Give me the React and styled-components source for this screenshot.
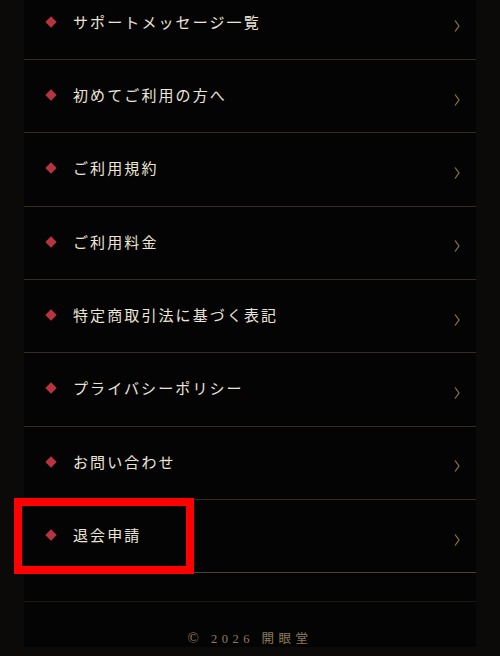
import styled, { createGlobalStyle } from "styled-components";

const GlobalStyle = createGlobalStyle`
  html, body {
    margin: 0;
    padding: 0;
    background: #0b0a08;
    overflow: hidden;
  }
`;

const items = [
  "サポートメッセージ一覧",
  "初めてご利用の方へ",
  "ご利用規約",
  "ご利用料金",
  "特定商取引法に基づく表記",
  "プライバシーポリシー",
  "お問い合わせ",
  "退会申請",
];

const App = () => (
  <>
    <GlobalStyle />
    <Page>
      <Menu>
        {items.map((label, i) => (
          <MenuRow key={label} $last={i === items.length - 1}>
            <Diamond />
            <Label>{label}</Label>
            <Chevron viewBox="0 0 6 12" aria-hidden="true">
              <polyline points="1,0.5 5,6 1,11.5" />
            </Chevron>
            {label === "退会申請" && <Highlight />}
          </MenuRow>
        ))}
      </Menu>
      <Footer>
        <Copy>©</Copy> 2026 開眼堂
      </Footer>
    </Page>
  </>
);

export default App;

const Page = styled.div`
  width: 452px;
  min-height: 656px;
  margin: 0 24px;
  background: #050404;
  font-family: "Noto Sans CJK JP", "Liberation Serif", sans-serif;
`;

const Menu = styled.ul`
  list-style: none;
  margin: -13.33px 0 0;
  padding: 0;
`;

const MenuRow = styled.li`
  position: relative;
  box-sizing: border-box;
  height: 73.33px;
  display: flex;
  align-items: center;
  padding: 0 16px 0 23px;
  border-bottom: 1px solid ${({ $last }) => ($last ? "#4a4231" : "#332d21")};
`;

const Diamond = styled.span`
  width: 8px;
  height: 8px;
  flex: none;
  background: #b53440;
  transform: rotate(45deg);
  margin-top: -2px;
`;

const Label = styled.span`
  flex: 1;
  margin-left: 18px;
  font-size: 15px;
  letter-spacing: 2.1px;
  color: #ebe5d9;
  margin-top: -3px;
`;

const Chevron = styled.svg`
  width: 6px;
  height: 12px;
  margin-top: 7px;
  fill: none;
  stroke: #8a7a52;
  stroke-width: 1.2;
`;

const Highlight = styled.span`
  position: absolute;
  left: -10px;
  top: -1.5px;
  width: 180px;
  height: 76px;
  box-sizing: border-box;
  border: 8px solid #ff0000;
  pointer-events: none;
`;

const Footer = styled.footer`
  margin-top: 28px;
  border-top: 1px solid #1c1915;
  padding-top: 26px;
  text-align: center;
  font-family: "Liberation Serif", "Noto Sans CJK JP", serif;
  font-size: 12.5px;
  letter-spacing: 4.5px;
  color: #8c7d5a;
`;

const Copy = styled.span`
  font-size: 15px;
`;
